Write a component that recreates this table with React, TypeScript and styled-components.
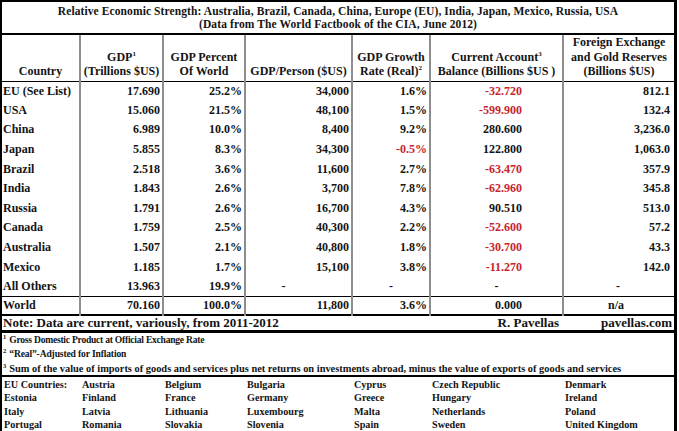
import React from "react";
import styled, { createGlobalStyle } from "styled-components";

const GlobalStyle = createGlobalStyle`
  html, body {
    margin: 0;
    padding: 0;
    background: #fff;
  }
  body {
    font-family: "Liberation Serif", "Times New Roman", serif;
    color: #141414;
  }
`;

const COLS = [78, 83, 82, 107, 78, 133, 111];
const RED = "#c8232c";
const GRID = "#8e8e8e";

type Align = "left" | "right" | "center";

const Frame = styled.div`
  width: 677px;
  box-sizing: border-box;
  border: 2px solid #000;
  border-right-width: 3px;
`;

const Table = styled.table`
  width: 100%;
  table-layout: fixed;
  border-collapse: collapse;
  font-weight: 700;
  font-size: 12px;
`;

const TitleCell = styled.td`
  height: 31px;
  padding: 0;
  text-align: center;
  line-height: 12.5px;
  font-size: 11.5px;
  letter-spacing: 0.1px;
  border-bottom: 2px solid #000;
`;

const HeadCell = styled.th<{ $first?: boolean }>`
  height: 43px;
  padding: 0 1px 2px;
  font-weight: 700;
  text-align: center;
  vertical-align: bottom;
  line-height: 14.5px;
  white-space: nowrap;
  overflow: hidden;
  border-bottom: 1px solid #000;
  border-left: ${(p) => (p.$first ? "none" : `2px solid ${GRID}`)};
`;

const Row = styled.tr<{ $world?: boolean }>`
  height: ${(p) => (p.$world ? "18px" : "19.6px")};
  border-top: ${(p) => (p.$world ? "1px solid #000" : "none")};
  border-bottom: ${(p) => (p.$world ? "2px solid #000" : "none")};
`;

const Cell = styled.td<{ $align?: Align; $pr?: number; $red?: boolean; $first?: boolean }>`
  padding: 0 ${(p) => (p.$pr ?? 2)}px 0 ${(p) => (p.$first ? 1 : 2)}px;
  text-align: ${(p) => p.$align ?? "right"};
  color: ${(p) => (p.$red ? RED : "inherit")};
  white-space: nowrap;
  border-left: ${(p) => (p.$first ? "none" : `2px solid ${GRID}`)};
`;

const NoteRow = styled.tr`
  height: 15px;
  border-bottom: 3px solid #000;
`;

const NoteCell = styled.td<{ $align?: Align; $pr?: number }>`
  padding: 0 ${(p) => (p.$pr ?? 2)}px 0 1px;
  text-align: ${(p) => p.$align ?? "left"};
  font-size: 13px;
  line-height: 14px;
  white-space: nowrap;
`;

const FootRow = styled.tr<{ $last?: boolean }>`
  height: 15px;
  border-bottom: ${(p) => (p.$last ? "2px solid #000" : "none")};
`;

const FootCell = styled.td<{ $size: number; $track: number }>`
  padding: 0 0 0 1px;
  font-size: ${(p) => p.$size}px;
  letter-spacing: ${(p) => p.$track}px;
  white-space: nowrap;
`;

const Sup = styled.sup`
  font-size: 6.5px;
  vertical-align: 4px;
  line-height: 0;
  margin-right: 3px;
  letter-spacing: 0;
`;

const HeadSup = styled.sup`
  font-size: 7px;
  vertical-align: 5px;
  line-height: 0;
`;

const EuRow = styled.tr`
  height: 13.5px;
`;

const EuCell = styled.td`
  padding: 2px 0 0 2px;
  font-size: 10.2px;
  line-height: 11px;
  white-space: nowrap;
`;

type Val = { v: string; red?: boolean; align?: Align; pr?: number };

const n = (v: string, red?: boolean): Val => ({ v, red });

const rows: { name: string; vals: Val[] }[] = [
  { name: "EU (See List)", vals: [n("17.690"), n("25.2%"), n("34,000"), n("1.6%"), n("-32.720", true), n("812.1")] },
  { name: "USA", vals: [n("15.060"), n("21.5%"), n("48,100"), n("1.5%"), n("-599.900", true), n("132.4")] },
  { name: "China", vals: [n("6.989"), n("10.0%"), n("8,400"), n("9.2%"), n("280.600"), n("3,236.0")] },
  { name: "Japan", vals: [n("5.855"), n("8.3%"), n("34,300"), n("-0.5%", true), n("122.800"), n("1,063.0")] },
  { name: "Brazil", vals: [n("2.518"), n("3.6%"), n("11,600"), n("2.7%"), n("-63.470", true), n("357.9")] },
  { name: "India", vals: [n("1.843"), n("2.6%"), n("3,700"), n("7.8%"), n("-62.960", true), n("345.8")] },
  { name: "Russia", vals: [n("1.791"), n("2.6%"), n("16,700"), n("4.3%"), n("90.510"), n("513.0")] },
  { name: "Canada", vals: [n("1.759"), n("2.5%"), n("40,300"), n("2.2%"), n("-52.600", true), n("57.2")] },
  { name: "Australia", vals: [n("1.507"), n("2.1%"), n("40,800"), n("1.8%"), n("-30.700", true), n("43.3")] },
  { name: "Mexico", vals: [n("1.185"), n("1.7%"), n("15,100"), n("3.8%"), n("-11.270", true), n("142.0")] },
  {
    name: "All Others",
    vals: [
      n("13.963"),
      n("19.9%"),
      { v: "-", align: "center", pr: 32 },
      { v: "-", align: "center" },
      { v: "-", align: "center" },
      { v: "-", align: "center" },
    ],
  },
];

const world: Val[] = [n("70.160"), n("100.0%"), n("11,800"), n("3.6%"), n("0.000"), { v: "n/a", align: "center", pr: 8 }];

// current account column sits away from its right edge
const padFor = (i: number, val: Val) => val.pr ?? (i === 4 && val.align !== "center" ? 40 : i === 5 ? 4 : 2);

const footnotes = [
  { mark: "1", text: "Gross Domestic Product at Official Exchange Rate", size: 9.6, track: -0.25 },
  { mark: "2", text: "\u201cReal\u201d-Adjusted for Inflation", size: 9.6, track: -0.15 },
  {
    mark: "3",
    text: "Sum of the value of imports of goods and services plus net returns on investments abroad, minus the value of exports of goods and services",
    size: 10.4,
    track: 0,
  },
];

const euCountries = [
  ["EU Countries:", "Austria", "Belgium", "Bulgaria", "Cyprus", "Czech Republic", "Denmark"],
  ["Estonia", "Finland", "France", "Germany", "Greece", "Hungary", "Ireland"],
  ["Italy", "Latvia", "Lithuania", "Luxembourg", "Malta", "Netherlands", "Poland"],
  ["Portugal", "Romania", "Slovakia", "Slovenia", "Spain", "Sweden", "United Kingdom"],
];

const DataRow = ({ name, vals, world: isWorld }: { name: string; vals: Val[]; world?: boolean }) => (
  <Row $world={isWorld}>
    <Cell $first $align="left">
      {name}
    </Cell>
    {vals.map((val, i) => (
      <Cell key={i} $align={val.align} $red={val.red} $pr={padFor(i, val)}>
        {val.v}
      </Cell>
    ))}
  </Row>
);

export default function App() {
  return (
    <>
      <GlobalStyle />
      <Frame>
        <Table>
          <colgroup>
            {COLS.map((w, i) => (
              <col key={i} style={{ width: w }} />
            ))}
          </colgroup>
          <tbody>
            <tr>
              <TitleCell colSpan={7}>
                Relative Economic Strength: Australia, Brazil, Canada, China, Europe (EU), India, Japan, Mexico, Russia, USA
                <br />
                (Data from The World Factbook of the CIA, June 2012)
              </TitleCell>
            </tr>
            <tr>
              <HeadCell $first>Country</HeadCell>
              <HeadCell>
                GDP<HeadSup>1</HeadSup>
                <br />
                (Trillions $US)
              </HeadCell>
              <HeadCell>
                GDP Percent
                <br />
                Of World
              </HeadCell>
              <HeadCell>GDP/Person ($US)</HeadCell>
              <HeadCell>
                GDP Growth
                <br />
                Rate (Real)<HeadSup>2</HeadSup>
              </HeadCell>
              <HeadCell>
                Current Account<HeadSup>3</HeadSup>
                <br />
                Balance (Billions $US )
              </HeadCell>
              <HeadCell>
                Foreign Exchange
                <br />
                and Gold Reserves
                <br />
                (Billions $US)
              </HeadCell>
            </tr>
            {rows.map((r) => (
              <DataRow key={r.name} name={r.name} vals={r.vals} />
            ))}
            <DataRow name="World" vals={world} world />
            <NoteRow>
              <NoteCell colSpan={5}>Note: Data are current, variously, from 2011-2012</NoteCell>
              <NoteCell $align="right" $pr={4}>
                R. Pavellas
              </NoteCell>
              <NoteCell $align="right" $pr={2}>
                pavellas.com
              </NoteCell>
            </NoteRow>
            {footnotes.map((f, i) => (
              <FootRow key={f.mark} $last={i === footnotes.length - 1}>
                <FootCell colSpan={7} $size={f.size} $track={f.track}>
                  <Sup>{f.mark}</Sup>
                  {f.text}
                </FootCell>
              </FootRow>
            ))}
            {euCountries.map((line, r) => (
              <EuRow key={r}>
                {line.map((c) => (
                  <EuCell key={c}>{c}</EuCell>
                ))}
              </EuRow>
            ))}
          </tbody>
        </Table>
      </Frame>
    </>
  );
}
